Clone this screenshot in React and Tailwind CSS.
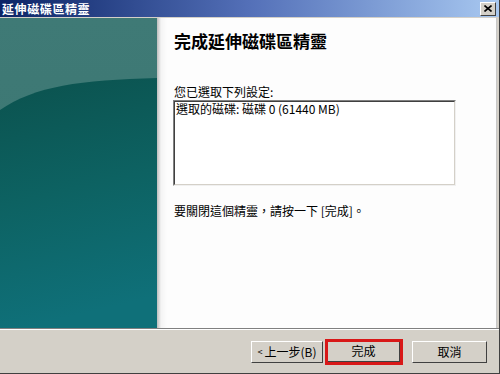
export default function App() {
  return (
    <div className="w-[500px] h-[374px] bg-[#d4d0c8] flex flex-col overflow-hidden border-r border-b border-r-[#404040] border-b-[#404040] font-['Noto_Sans_CJK_TC','Liberation_Sans',sans-serif] text-black">
      {/* Title bar */}
      <div className="h-[17px] flex items-center justify-between bg-linear-to-r from-[#0c2466] via-[#5470b8] to-[#a8c8f0]">
        <span className="text-white font-bold text-[12px] leading-[17px] pl-[2px] tracking-[0.6px]">延伸磁碟區精靈</span>
        <div className="w-[16px] h-[14px] mr-[3px] bg-[#d4d0c8] border-t border-l border-t-white border-l-white border-r border-b border-r-[#404040] border-b-[#404040] flex items-center justify-center">
          <svg width="8" height="7" viewBox="0 0 8 7">
            <path d="M0.5 0.5 L7.5 6.5 M7.5 0.5 L0.5 6.5" stroke="#000" strokeWidth="1.6" />
          </svg>
        </div>
      </div>
      <div className="h-[1px] bg-[#d4d0c8]" />
      {/* Body */}
      <div className="h-[310px] flex pr-[2px]">
        <div className="w-[157px] h-full shrink-0">
          <svg width="157" height="310" viewBox="0 0 157 310" preserveAspectRatio="none">
            <defs>
              <linearGradient id="top" x1="0" y1="0" x2="0" y2="1">
                <stop offset="0" stopColor="#3f7a76" />
                <stop offset="1" stopColor="#3a7571" />
              </linearGradient>
              <linearGradient id="bot" x1="0" y1="0" x2="0.15" y2="1">
                <stop offset="0" stopColor="#0b524e" />
                <stop offset="0.5" stopColor="#0d6262" />
                <stop offset="1" stopColor="#0f7079" />
              </linearGradient>
            </defs>
            <rect x="0" y="0" width="157" height="310" fill="url(#top)" />
            <path d="M0 92 C 35 68, 80 62, 157 60 L157 310 L0 310 Z" fill="url(#bot)" />
          </svg>
        </div>
        <div className="flex-1 h-full flex flex-col pl-[17px] pt-[13px] bg-[linear-gradient(to_right,#bdbdbd,#f4f4f4_4px,#fdfdfd_10px)] border-r border-r-[#c8c8c8]">
          <div className="text-[17px] font-bold leading-[20px]">完成延伸磁碟區精靈</div>
          <div className="mt-[34px] text-[12px] leading-[14px]">您已選取下列設定:</div>
          <div className="mt-[1px] ml-[-1px] w-[283px] h-[86px] border-t border-l border-t-[#808080] border-l-[#808080] border-b border-r border-b-[#f0f0f0] border-r-[#f0f0f0]">
            <div className="w-full h-full border-t border-l border-t-[#404040] border-l-[#404040] border-b border-r border-b-[#d4d0c8] border-r-[#d4d0c8] bg-white px-[1px] text-[12px] leading-[14px]">
              選取的磁碟: 磁碟 0 (61440 MB)
            </div>
          </div>
          <div className="mt-[18px] text-[12px] leading-[14px]">要關閉這個精靈，請按一下 [完成]。</div>
        </div>
      </div>
      {/* Separator */}
      <div className="h-[1px] bg-[#808080]" />
      <div className="h-[1px] bg-white" />
      {/* Footer */}
      <div className="flex-1 flex items-center justify-end pr-[12px]">
        <button className="w-[72px] h-[22px] bg-[#d4d0c8] border-t border-l border-t-white border-l-white border-r border-b border-r-[#404040] border-b-[#404040] text-[12px] leading-[14px] flex items-center justify-center">
          <span className="text-[9px] mr-[2px]">&lt;</span>上一步(B)
        </button>
        <div className="ml-[2px] w-[78px] h-[26px] border-[3px] border-[#d81818] flex">
          <button className="w-full h-full bg-[#d4d0c8] border-r border-b border-r-[#404040] border-b-[#404040] text-[12px] leading-[14px] flex items-center justify-center">
            完成
          </button>
        </div>
        <button className="ml-[9px] w-[75px] h-[22px] bg-[#d4d0c8] border-t border-l border-t-white border-l-white border-r border-b border-r-[#404040] border-b-[#404040] text-[12px] leading-[14px] flex items-center justify-center">
          取消
        </button>
      </div>
    </div>
  );
}
